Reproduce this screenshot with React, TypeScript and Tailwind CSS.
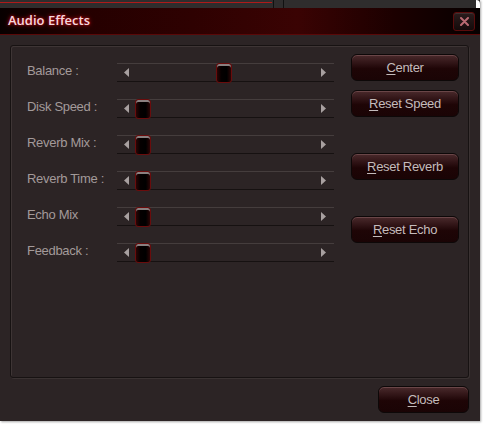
import React from "react";

const ff = { fontFamily: '"Liberation Sans", Arial, sans-serif' };

function Btn({ label, className = "" }: { label: string; className?: string }) {
  return (
    <div
      className={
        "relative flex h-[27px] items-center justify-center overflow-hidden rounded-[6px] border border-[#0d0808] bg-[linear-gradient(to_bottom,#4a2a2c_0%,#2e1214_35%,#1e0506_55%,#1a0405_100%)] shadow-[inset_0_1px_0_#6a4648] text-[13px] tracking-[-0.3px] text-[#c4bcbc] " +
        className
      }
      style={ff}
    >
      <span>
        <u className="underline-offset-[2px]">{label[0]}</u>
        {label.slice(1)}
      </span>
    </div>
  );
}

function Slider({ label, pos }: { label: string; pos: number }) {
  return (
    <div className="flex h-[19px] items-center">
      <div
        className="w-[90px] -mt-[3px] text-[13px] tracking-[-0.3px] text-[#a39a9a]"
        style={ff}
      >
        {label}
      </div>
      <div className="relative h-[19px] w-[217px] border-t border-b border-t-[#453d3d] border-b-[#161111]">
        <svg className="absolute left-[7px] top-[4px]" width="5" height="9" viewBox="0 0 5 9">
          <polygon points="5,0 5,9 0,4.5" fill="#a8a0a0" />
        </svg>
        <svg className="absolute right-[8px] top-[4px]" width="5" height="9" viewBox="0 0 5 9">
          <polygon points="0,0 0,9 5,4.5" fill="#a8a0a0" />
        </svg>
        <div
          className="absolute top-[-1px] h-[20px] w-[16px] rounded-[3px] border border-[#6a0c0c] bg-[linear-gradient(to_right,#2a0505,#050000_30%,#000_70%,#2a0505)] shadow-[inset_0_2px_0_#8a8080]"
          style={{ left: pos }}
        />
      </div>
    </div>
  );
}

export default function App() {
  return (
    <div className="relative h-[424px] w-[484px] overflow-hidden bg-white">
      <div className="flex h-[421px] w-[480px] flex-col bg-[#2c2425] shadow-[1px_1px_2px_rgba(0,0,0,0.35)]">
        {/* strip of window behind */}
        <div className="relative flex h-[8px] bg-[#2f2d2d]">
          <div className="mt-[2px] h-[1px] w-[272px] bg-[#b01a1a]" />
          <div className="ml-[1px] h-[8px] w-[1px] bg-[#111]" />
          <div className="ml-[9px] h-[8px] w-[1px] bg-[#111]" />
          <div className="flex-1" />
          <div className="h-[8px] w-[4px] rounded-tr-[4px] bg-white" />
        </div>
        {/* title bar */}
        <div className="relative flex h-[27px] items-center border-b border-b-[#5a0808] bg-[linear-gradient(to_right,#080000_0%,#250000_18%,#2e0101_40%,#3a0303_62%,#1c0000_82%,#060000_100%)] pl-[8px]">
          <span
            className="text-[13px] font-semibold text-[#f2d8de] [text-shadow:0_0_4px_#d0101a,0_0_2px_#a00010]"
            style={{ fontFamily: '"Open Sans", "Noto Sans", sans-serif' }}
          >
            Audio Effects
          </span>
          <div className="flex-1" />
          <div className="mr-[5px] flex h-[19px] w-[22px] items-center justify-center rounded-[3px] border border-[#5a0c0c] bg-[linear-gradient(to_bottom,#2a1c1c,#140a0a)] shadow-[inset_0_1px_0_#3e3030]">
            <svg width="9" height="9" viewBox="0 0 9 9">
              <path d="M1 1 L8 8 M8 1 L1 8" stroke="#b86a72" strokeWidth="2" strokeLinecap="round" />
            </svg>
          </div>
        </div>
        {/* body */}
        <div className="flex flex-1 flex-col pl-[10px] pt-[10px]">
          <div className="flex h-[333px] w-[459px] rounded-[3px] border border-[#171212] shadow-[inset_1px_1px_0_#3e3535,1px_1px_0_#3a3232] pl-[16px] pr-[8px]">
            <div className="flex flex-col gap-[17px] pt-[17px]">
              <Slider label="Balance :" pos={99} />
              <Slider label="Disk Speed :" pos={18} />
              <Slider label="Reverb Mix :" pos={18} />
              <Slider label="Reverb Time :" pos={18} />
              <Slider label="Echo Mix" pos={18} />
              <Slider label="Feedback :" pos={18} />
            </div>
            <div className="ml-[17px] flex w-[108px] flex-col pt-[8px]">
              <Btn label="Center" />
              <Btn label="Reset Speed" className="mt-[9px]" />
              <Btn label="Reset Reverb" className="mt-[36px]" />
              <Btn label="Reset Echo" className="mt-[36px]" />
            </div>
          </div>
          <div className="flex justify-end pr-[11px] pt-[8px]">
            <Btn label="Close" className="w-[91px]" />
          </div>
        </div>
      </div>
    </div>
  );
}
